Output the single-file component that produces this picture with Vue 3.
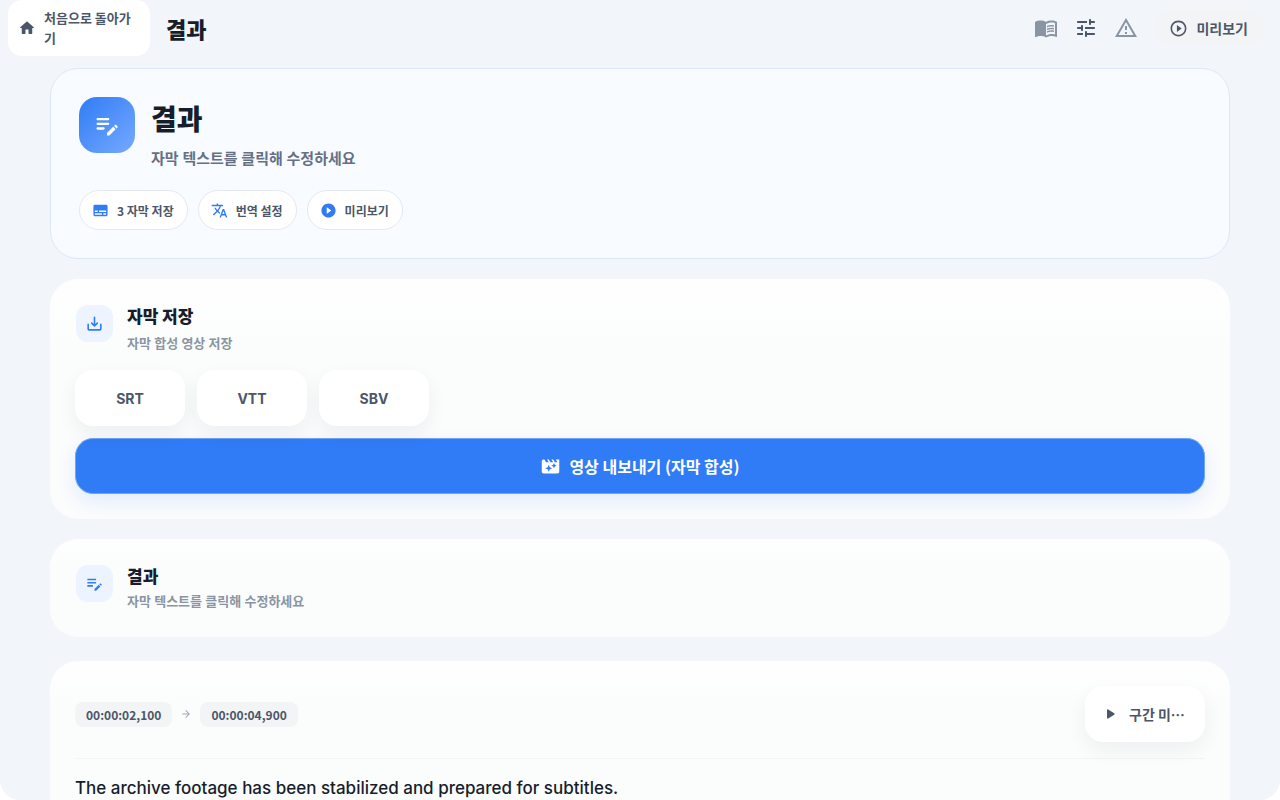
<script setup>
import { h } from 'vue'

const paths = {
  home: 'M10 19v-5h4v5c0 .55.45 1 1 1h3c.55 0 1-.45 1-1v-7h1.7c.46 0 .68-.57.33-.87L12.67 3.6c-.38-.34-.96-.34-1.34 0l-8.36 7.53c-.34.3-.13.87.33.87H5v7c0 .55.45 1 1 1h3c.55 0 1-.45 1-1z',
  book: 'M21 5c-1.11-.35-2.33-.5-3.5-.5-1.95 0-4.05.4-5.5 1.5-1.45-1.1-3.55-1.5-5.5-1.5S2.45 4.9 1 6v14.65c0 .25.25.5.5.5.1 0 .15-.05.25-.05C3.1 20.45 5.05 20 6.5 20c1.95 0 4.05.4 5.5 1.5 1.35-.85 3.8-1.5 5.5-1.5 1.65 0 3.35.3 4.75 1.05.1.05.15.05.25.05.25 0 .5-.25.5-.5V6c-.6-.45-1.25-.75-2-1zm0 13.5c-1.1-.35-2.3-.5-3.5-.5-1.7 0-4.15.65-5.5 1.5V8c1.35-.85 3.8-1.5 5.5-1.5 1.2 0 2.4.15 3.5.5v11.5zM17.5 10.5c.88 0 1.73.09 2.5.26V9.24c-.79-.15-1.64-.24-2.5-.24-1.7 0-3.24.29-4.5.83v1.66c1.13-.64 2.7-.99 4.5-.99zM13 12.49v1.66c1.13-.64 2.7-.99 4.5-.99.88 0 1.73.09 2.5.26V11.9c-.79-.15-1.64-.24-2.5-.24-1.7 0-3.24.3-4.5.83zM17.5 14.33c-1.7 0-3.24.29-4.5.83v1.66c1.13-.64 2.7-.99 4.5-.99.88 0 1.73.09 2.5.26v-1.52c-.79-.16-1.64-.24-2.5-.24z',
  tune: 'M3 18c0 .55.45 1 1 1h5v-2H4c-.55 0-1 .45-1 1zM3 6c0 .55.45 1 1 1h9V5H4c-.55 0-1 .45-1 1zm10 14v-1h7c.55 0 1-.45 1-1s-.45-1-1-1h-7v-1c0-.55-.45-1-1-1s-1 .45-1 1v4c0 .55.45 1 1 1s1-.45 1-1zM7 10v1H4c-.55 0-1 .45-1 1s.45 1 1 1h3v1c0 .55.45 1 1 1s1-.45 1-1v-4c0-.55-.45-1-1-1s-1 .45-1 1zm14 2c0-.55-.45-1-1-1h-9v2h9c.55 0 1-.45 1-1zm-5-3c.55 0 1-.45 1-1V7h3c.55 0 1-.45 1-1s-.45-1-1-1h-3V4c0-.55-.45-1-1-1s-1 .45-1 1v4c0 .55.45 1 1 1z',
  warning: 'M12 5.99L19.53 19H4.47L12 5.99M12 2L1 21h22L12 2zm1 14h-2v2h2v-2zm0-6h-2v4h2v-4z',
  playOutline: 'M10 16.5l6-4.5-6-4.5v9zM12 2C6.48 2 2 6.48 2 12s4.48 10 10 10 10-4.48 10-10S17.52 2 12 2zm0 18c-4.41 0-8-3.59-8-8s3.59-8 8-8 8 3.59 8 8-3.59 8-8 8z',
  playCircle: 'M12 2C6.48 2 2 6.48 2 12s4.48 10 10 10 10-4.48 10-10S17.52 2 12 2zm-2.5 13.8V8.2c0-.4.4-.6.7-.4l5.3 3.8c.3.2.3.6 0 .8l-5.3 3.8c-.3.2-.7 0-.7-.4z',
  editRound: 'M14 11c0 .55-.45 1-1 1H4c-.55 0-1-.45-1-1s.45-1 1-1h9c.55 0 1 .45 1 1zM3 7c0 .55.45 1 1 1h9c.55 0 1-.45 1-1s-.45-1-1-1H4c-.55 0-1 .45-1 1zm7 8c0-.55-.45-1-1-1H4c-.55 0-1 .45-1 1s.45 1 1 1h5c.55 0 1-.45 1-1zm8.01-2.13l.71-.71c.39-.39 1.02-.39 1.41 0l.71.71c.39.39.39 1.02 0 1.41l-.71.71-2.12-2.12zm-.71.71l-5.16 5.16c-.09.09-.14.21-.14.35v1.41c0 .28.22.5.5.5h1.41c.13 0 .26-.05.35-.15l5.16-5.16-2.12-2.11z',
  edit: 'M3 10h11v2H3v-2zm0-2h11V6H3v2zm0 8h7v-2H3v2zm15.01-3.13l.71-.71c.39-.39 1.02-.39 1.41 0l.71.71c.39.39.39 1.02 0 1.41l-.71.71-2.12-2.12zm-.71.71l-5.3 5.3V21h2.12l5.3-5.3-2.12-2.12z',
  subtitles: 'M20 4H4c-1.1 0-2 .9-2 2v12c0 1.1.9 2 2 2h16c1.1 0 2-.9 2-2V6c0-1.1-.9-2-2-2zM4 12h4v2H4v-2zm10 6H4v-2h10v2zm6 0h-4v-2h4v2zm0-4H10v-2h10v2z',
  translate: 'M12.87 15.07l-2.54-2.51.03-.03c1.74-1.94 2.98-4.17 3.71-6.53H17V4h-7V2H8v2H1v1.99h11.17C11.5 7.92 10.44 9.75 9 11.35 8.07 10.32 7.3 9.19 6.69 8h-2c.73 1.63 1.73 3.17 2.98 4.56l-5.09 5.02L4 19l5-5 3.11 3.11.76-2.04zM18.5 10h-2L12 22h2l1.12-3h4.75L21 22h2l-4.5-12zm-2.62 7l1.62-4.33L19.12 17h-3.24z',
  save: 'M19 13v6H5v-6c0-.55-.45-1-1-1s-1 .45-1 1v6c0 1.1.9 2 2 2h14c1.1 0 2-.9 2-2v-6c0-.55-.45-1-1-1s-1 .45-1 1zm-6-.33l1.88-1.87c.39-.39 1.02-.39 1.41 0 .39.39.39 1.02 0 1.41l-3.59 3.59c-.39.39-1.02.39-1.41 0L7.7 12.2c-.39-.39-.39-1.02 0-1.41.39-.39 1.02-.39 1.41 0L11 12.67V4c0-.55.45-1 1-1s1 .45 1 1v8.67z',
  movie: 'M18 4l2 3h-3l-2-3h-2l2 3h-3l-2-3H8l2 3H7L5 4H4c-1.1 0-1.99.9-1.99 2L2 18c0 1.1.9 2 2 2h16c1.1 0 2-.9 2-2V4h-4zm-6.75 11.25L10 18l-1.25-2.75L6 14l2.75-1.25L10 10l1.25 2.75L14 14l-2.75 1.25zm5.69-3.31L16 14l-.94-2.06L13 11l2.06-.94L16 8l.94 2.06L19 11l-2.06.94z',
  arrow: 'M5 13h11.17l-4.88 4.88c-.39.39-.39 1.03 0 1.42.39.39 1.02.39 1.41 0l6.59-6.59c.39-.39.39-1.02 0-1.41l-6.58-6.6c-.39-.39-1.02-.39-1.41 0-.39.39-.39 1.02 0 1.41L16.17 11H5c-.55 0-1 .45-1 1s.45 1 1 1z',
  play: 'M8 6.8v10.4c0 .8.9 1.25 1.55.85l8.1-5.2c.6-.4.6-1.3 0-1.7l-8.1-5.2C8.9 5.55 8 6 8 6.8z',
}

const Icon = ({ name, size }) =>
  h('svg', { viewBox: '0 0 24 24', width: size, height: size, fill: 'currentColor', 'aria-hidden': 'true' }, [
    h('path', { d: paths[name] }),
  ])
Icon.props = ['name', 'size']

const tools = [
  { icon: 'book', label: '사용 안내', muted: true },
  { icon: 'tune', label: '설정', muted: false },
  { icon: 'warning', label: '알림', muted: true },
]
const chips = [
  { icon: 'subtitles', text: '3 자막 저장' },
  { icon: 'translate', text: '번역 설정' },
  { icon: 'playCircle', text: '미리보기' },
]
const formats = ['SRT', 'VTT', 'SBV']
</script>

<template>
  <div class="app">
    <header class="bar">
      <button class="back" type="button">
        <Icon name="home" size="18" />
        <span>처음으로 돌아가기</span>
      </button>
      <h1 class="bar-title">결과</h1>
      <div class="tools">
        <button v-for="t in tools" :key="t.icon" type="button" class="tool" :class="{ muted: t.muted }" :aria-label="t.label">
          <Icon :name="t.icon" size="24" />
        </button>
      </div>
      <button class="preview" type="button">
        <Icon name="playOutline" size="19" />
        <span>미리보기</span>
      </button>
    </header>

    <main class="content">
      <section class="hero">
        <div class="hero-head">
          <div class="hero-icon"><Icon name="editRound" size="28" /></div>
          <div>
            <h2 class="hero-title">결과</h2>
            <p class="hero-sub">자막 텍스트를 클릭해 수정하세요</p>
          </div>
        </div>
        <div class="chips">
          <button v-for="c in chips" :key="c.icon" type="button" class="chip">
            <Icon :name="c.icon" size="17" />
            <span>{{ c.text }}</span>
          </button>
        </div>
      </section>

      <section class="card">
        <div class="card-head">
          <div class="card-icon"><Icon name="save" size="19" /></div>
          <div>
            <h3 class="card-title">자막 저장</h3>
            <p class="card-sub spaced">자막 합성 영상 저장</p>
          </div>
        </div>
        <div class="formats">
          <button v-for="f in formats" :key="f" type="button" class="raised format">{{ f }}</button>
        </div>
        <button class="export" type="button">
          <Icon name="movie" size="21" />
          <span>영상 내보내기 (자막 합성)</span>
        </button>
      </section>

      <section class="card">
        <div class="card-head">
          <div class="card-icon"><Icon name="edit" size="19" /></div>
          <div>
            <h3 class="card-title">결과</h3>
            <p class="card-sub">자막 텍스트를 클릭해 수정하세요</p>
          </div>
        </div>
      </section>

      <section class="card cue">
        <div class="cue-head">
          <div class="times">
            <span class="time">00:00:02,100</span>
            <Icon name="arrow" size="12" />
            <span class="time">00:00:04,900</span>
          </div>
          <button class="raised segment" type="button" aria-label="구간 미리보기">
            <Icon name="play" size="18" />
            <span>구간 미…</span>
          </button>
        </div>
        <p class="cue-text">The archive footage has been stabilized and prepared for subtitles.</p>
      </section>
    </main>
  </div>
</template>

<style>
body {
  margin: 0;
  background: #fff;
}
</style>

<style scoped>
.app {
  height: 100vh;
  overflow: hidden;
  display: flex;
  flex-direction: column;
  background: #f2f6fa;
  border-radius: 0 0 20px 20px;
  color: #171e2b;
  font-family: Inter, "Noto Sans CJK KR", sans-serif;
}
svg {
  display: block;
  flex: none;
}
h1, h2, h3, p {
  margin: 0;
}
button {
  border: 0;
  margin: 0;
  padding: 0;
  background: none;
  font: inherit;
  color: #4b5768;
  cursor: pointer;
}
.bar {
  display: flex;
  align-items: center;
  height: 56px;
  padding: 0 16px 0 8px;
  flex: none;
}
.back {
  display: flex;
  align-items: center;
  gap: 8px;
  width: 142px;
  height: 56px;
  padding: 0 12px 0 10px;
  border-radius: 14px;
  background: #fff;
  text-align: left;
  word-break: break-all;
  font-family: "Noto Sans CJK KR", sans-serif;
  font-size: 13px;
  line-height: 20px;
  font-weight: 700;
}
.bar-title {
  margin-left: 16px;
  flex: 1;
  padding-top: 4px;
  font-size: 22px;
  line-height: 32px;
  font-weight: 800;
}
.tools {
  display: flex;
  margin-right: 8px;
}
.tool {
  display: grid;
  place-items: center;
  width: 40px;
  height: 40px;
}
.tool.muted {
  color: #8a95a3;
}
.preview {
  display: flex;
  align-items: center;
  gap: 8px;
  height: 32px;
  padding: 0 16px 0 15px;
  border-radius: 14px;
  background: #f3f4f6;
  font-size: 14px;
  font-weight: 600;
}
.content {
  flex: 1;
  min-height: 0;
  overflow-y: auto;
  scrollbar-width: none;
  padding: 12px 50px 0;
}
.hero {
  padding: 28px;
  border: 1px solid #dce8f6;
  border-radius: 28px;
  background: #f8fbff;
  margin-bottom: 20px;
}
.hero-head {
  display: flex;
  gap: 16px;
}
.hero-icon {
  display: grid;
  place-items: center;
  width: 56px;
  height: 56px;
  border-radius: 18px;
  color: #fff;
  background: linear-gradient(135deg, #2f7cf6, #76a9ff);
}
.hero-title {
  font-size: 28px;
  line-height: 46px;
  font-weight: 900;
}
.hero-sub {
  margin-top: 5px;
  font-size: 15px;
  line-height: 22px;
  font-weight: 600;
  color: #667085;
}
.chips {
  display: flex;
  gap: 10px;
  margin-top: 20px;
}
.chip {
  display: flex;
  align-items: center;
  gap: 8px;
  height: 40px;
  padding: 0 13px 0 12px;
  border: 1px solid #e4e9f2;
  border-radius: 20px;
  background: #fff;
  font-family: "Noto Sans CJK KR", sans-serif;
  font-size: 12px;
  font-weight: 700;
}
.chip svg {
  color: #2f7cf6;
}
.card {
  padding: 25px;
  border-radius: 28px;
  background: linear-gradient(#fefefe, #fbfdfc 30%, #fbfcfd);
  margin-bottom: 20px;
}
.card-head {
  display: flex;
  gap: 14px;
  padding: 1px 0 0 1px;
}
.card-icon {
  display: grid;
  place-items: center;
  width: 37px;
  height: 37px;
  border-radius: 12px;
  color: #2f7cf6;
  background: #edf4ff;
}
.card-title {
  font-size: 17px;
  line-height: 25px;
  font-weight: 800;
}
.card-sub {
  font-size: 13px;
  line-height: 22px;
  font-weight: 600;
  color: #8a95a3;
}
.card-sub.spaced {
  margin-top: 2px;
}
.raised {
  background: #fff;
  border-radius: 18px;
  box-shadow: 0 8px 20px rgba(23, 30, 43, 0.06);
  height: 56px;
}
.formats {
  display: flex;
  gap: 12px;
  margin-top: 16px;
}
.format {
  width: 110px;
  font-size: 14px;
  font-weight: 700;
}
.export {
  display: flex;
  align-items: center;
  justify-content: center;
  gap: 8px;
  width: 100%;
  height: 56px;
  margin-top: 12px;
  border: 1px solid #6ea4f9;
  border-radius: 18px;
  background: #2f7cf6;
  color: #fff;
  font-family: "Noto Sans CJK KR", sans-serif;
  font-size: 16px;
  line-height: 24px;
  font-weight: 700;
  box-shadow: 0 8px 20px rgba(47, 124, 246, 0.12);
}
.cue {
  margin-top: 24px;
}
.cue-head {
  display: flex;
  align-items: center;
  justify-content: space-between;
  padding-bottom: 16px;
  border-bottom: 1px solid #f2f4f6;
}
.times {
  display: flex;
  align-items: center;
  gap: 8px;
  color: #a0a8b4;
}
.time {
  padding: 0 11px;
  border-radius: 8px;
  background: #f3f4f6;
  color: #4b5768;
  font-family: "Noto Sans CJK KR", sans-serif;
  font-size: 12px;
  line-height: 25px;
  font-weight: 700;
}
.segment {
  display: flex;
  align-items: center;
  gap: 10px;
  width: 120px;
  padding: 0 16px;
  font-family: "Noto Sans CJK KR", sans-serif;
  font-size: 14px;
  font-weight: 600;
  white-space: nowrap;
}
.cue-text {
  margin-top: 16px;
  font-size: 17px;
  line-height: 26px;
  font-weight: 500;
}
</style>
